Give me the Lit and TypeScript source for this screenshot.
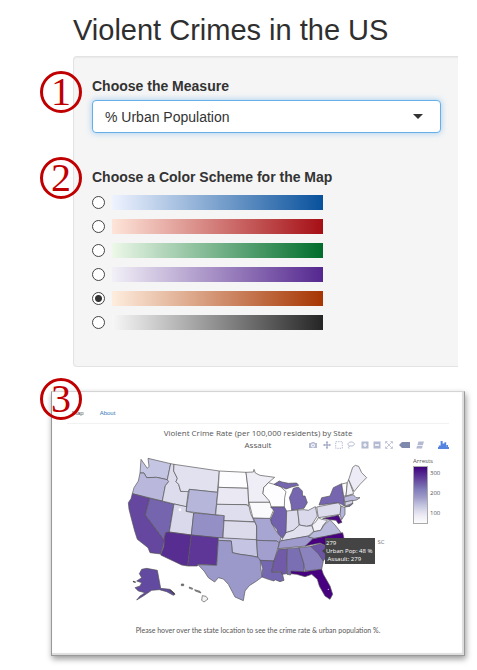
import { LitElement, html, css, svg } from "lit";
import { customElement, state } from "lit/decorators.js";

type Shape = [name: string, fill: string, points: string];

const SHAPES: Shape[] = [
  ["WA", "#c4c4e3", "63,25 82,52 87,46 84,22 152,38 142,86 110,79 80,80 72,66 60,66"],
  ["OR", "#b9b8dc", "60,66 72,66 80,80 110,79 142,86 146,92 136,104 127,150 37,128 42,110 55,90"],
  ["CA", "#65479f", "37,128 89,142 76,192 133,268 130,285 122,309 90,305 84,290 52,265 44,240 36,210 27,175 25,155 33,143"],
  ["NV", "#7564ae", "89,142 162,159 148,245 137,245 133,268 76,192"],
  ["ID", "#dddcec", "152,38 162,40 161,60 172,82 168,92 176,100 182,121 205,119 199,168 127,150 136,104 146,92 142,86"],
  ["MT", "#e2e1f0", "162,40 298,60 292,124 208,115 205,122 182,121 176,100 168,92 172,82 161,60"],
  ["WY", "#b6b5da", "208,115 293,124 286,192 198,181"],
  ["UT", "#dad9eb", "162,159 200,167 198,181 221,186 214,252 148,243"],
  ["CO", "#9490c5", "221,186 313,194 308,262 214,252"],
  ["AZ", "#582d91", "145,243 214,252 203,345 185,342 122,312 132,285 133,262 137,245"],
  ["NM", "#5e3697", "214,252 295,260 290,343 234,340 232,345 203,345"],
  ["ND", "#fdfcfe", "298,60 378,64 384,112 295,109"],
  ["SD", "#eae8f3", "295,109 384,112 386,164 378,161 290,160"],
  ["NE", "#dfdeee", "290,160 378,161 387,165 392,188 403,212 312,209 313,194 287,191"],
  ["KS", "#dcdbec", "312,209 405,213 410,225 409,268 309,262"],
  ["OK", "#c5c5e3", "295,260 409,266 413,318 390,314 360,310 337,305 334,270 295,268"],
  ["TX", "#9b98ca", "295,268 334,270 337,305 360,310 390,314 420,320 422,345 426,378 410,390 388,404 375,420 370,449 345,438 325,400 310,384 295,380 284,393 265,380 252,360 234,341 290,343"],
  ["MN", "#efedf6", "378,64 400,63 402,55 406,66 420,73 435,75 464,79 445,95 431,110 429,128 450,150 450,154 386,154 384,112"],
  ["IA", "#faf9fc", "387,154 450,154 463,172 456,188 450,203 399,201"],
  ["MO", "#a7a5d1", "400,202 450,202 456,218 468,240 484,258 478,275 470,275 470,270 410,268 410,225"],
  ["AR", "#a29fce", "410,268 470,270 478,275 474,290 462,330 421,328 413,318"],
  ["LA", "#7668b0", "421,328 462,330 458,345 455,363 486,364 492,388 480,392 465,386 462,390 445,385 426,378 428,352"],
  ["WI", "#fdfcfe", "445,95 431,110 429,128 448,150 454,168 493,168 494,140 498,122 480,106 462,100"],
  ["MI-N", "#7566af", "462,100 478,90 486,93 505,97 530,96 536,103 515,108 498,114 480,106"],
  ["MI", "#7566af", "520,112 535,108 547,120 548,135 555,135 562,155 552,172 515,178 513,160 508,140 515,125"],
  ["IL", "#7261ac", "452,168 493,168 500,180 500,230 498,248 488,262 475,248 470,235 455,218 452,205 463,180"],
  ["IN", "#dddcec", "500,180 533,177 538,225 520,238 498,245"],
  ["OH", "#dad9eb", "533,177 552,176 565,178 586,167 592,195 575,222 560,226 538,222"],
  ["KY", "#e1e0ee", "488,262 498,245 520,238 538,222 560,226 575,224 582,240 565,255 484,270"],
  ["TN", "#9e9bcc", "480,270 582,252 576,268 558,285 474,293"],
  ["WV", "#f4f2f9", "576,222 588,212 595,200 605,205 622,208 610,222 602,238 582,242"],
  ["VA", "#b9b9dc", "565,258 582,242 602,238 612,222 630,206 645,222 658,238 665,248 582,262"],
  ["PA", "#dedded", "590,168 655,155 663,165 661,190 595,200"],
  ["MD", "#4b0882", "608,202 645,195 655,192 666,214 655,218 648,208 630,206"],
  ["NY", "#7665af", "597,162 605,140 630,135 640,110 665,98 670,130 674,166 665,160 655,155"],
  ["NJ", "#b5b5da", "663,165 675,170 675,190 665,206 660,190"],
  ["VT", "#fbfafd", "665,99 682,95 678,135 671,135"],
  ["NH", "#f3f1f8", "682,95 686,86 701,128 678,135"],
  ["ME", "#edebf5", "686,86 698,49 706,43 716,46 725,65 740,80 720,100 702,122"],
  ["MA", "#bbbadd", "672,138 700,131 708,140 720,140 710,147 674,153"],
  ["CT", "#d3d2e8", "675,153 698,148 698,157 676,165"],
  ["LI", "#7665af", "675,168 690,162 699,157 690,166"],
  ["MS", "#715ba9", "475,295 502,293 500,368 486,370 484,362 455,362 462,330"],
  ["AL", "#7b6fb4", "502,293 537,290 552,340 552,362 512,365 512,372 501,370"],
  ["GA", "#8a83bd", "537,290 575,286 595,305 610,330 605,355 555,360 552,340"],
  ["SC", "#6c55a5", "572,286 600,278 625,288 632,300 610,330 595,308"],
  ["NC", "#480080", "556,285 578,264 668,245 672,262 655,290 632,300 622,286 600,276"],
  ["FL", "#460080", "513,360 552,362 605,355 610,370 630,405 638,430 630,445 615,435 598,405 592,385 575,370 555,377 530,370 513,368"],
  ["AK", "#634aa1", "65,355 80,352 112,358 122,412 150,415 165,430 160,433 140,422 118,416 95,418 70,435 50,447 60,435 75,425 55,420 45,410 60,405 65,395 50,390 65,380 58,368"],
  ["HI-1", "#777777", "184,399 191,399 191,404 184,404"],
  ["HI-2", "#999999", "208,408 218,412 217,415 208,412"],
  ["HI-3", "#999999", "224,416 240,421 243,426 226,420"],
  ["HI-4", "#f4f4f4", "247,434 258,436 264,444 252,453 245,448"],
];

const SCHEMES = [
  { id: "blues", label: "Blues", from: "#eff3ff", to: "#08519c" },
  { id: "reds", label: "Reds", from: "#fee5d9", to: "#a50f15" },
  { id: "greens", label: "Greens", from: "#edf8e9", to: "#006d2c" },
  { id: "purples", label: "Purples", from: "#f2f0f7", to: "#54278f" },
  { id: "oranges", label: "Oranges", from: "#feedde", to: "#a63603" },
  { id: "greys", label: "Greys", from: "#f7f7f7", to: "#252525" },
];

const box = (body: unknown, w = 8) =>
  html`<svg viewBox="0 0 ${w} 8" width=${w} height="8" aria-hidden="true">${body}</svg>`;

const TOOLS: { label: string; cls: string; icon: unknown }[] = [
  { label: "Download plot", cls: "", icon: box(svg`<path fill-rule="evenodd" d="M0 2H2L3 1H5L6 2H8V7H0ZM4 2.6A1.9 1.9 0 1 0 4 6.4A1.9 1.9 0 1 0 4 2.6ZM4 3.6A.9 .9 0 1 1 4 5.4A.9 .9 0 1 1 4 3.6Z"/>`) },
  { label: "Pan", cls: "group strong", icon: box(svg`<path d="M4 0L5.3 1.5H4.5V3.5H6.5V2.7L8 4L6.5 5.3V4.5H4.5V6.5H5.3L4 8L2.7 6.5H3.5V4.5H1.5V5.3L0 4L1.5 2.7V3.5H3.5V1.5H2.7Z"/>`) },
  { label: "Box select", cls: "", icon: box(svg`<rect x=".7" y=".7" width="6.6" height="6.6" fill="none" stroke="currentColor" stroke-dasharray="1.4 1"/>`) },
  { label: "Lasso select", cls: "", icon: box(svg`<path fill="none" stroke="currentColor" d="M2.4 5C-.6 3.6 1.4 1 4.2 1S8.4 3.4 6.4 4.6S3.4 4 2 5.4S2.6 6.6 2 7.6"/>`) },
  { label: "Zoom in", cls: "group", icon: box(svg`<path fill-rule="evenodd" d="M.5 .5H7.5V7.5H.5ZM3.4 2V3.4H2V4.6H3.4V6H4.6V4.6H6V3.4H4.6V2Z"/>`) },
  { label: "Zoom out", cls: "", icon: box(svg`<path fill-rule="evenodd" d="M.5 .5H7.5V7.5H.5ZM2 3.3V4.7H6V3.3Z"/>`) },
  { label: "Reset", cls: "", icon: box(svg`<path fill="none" stroke="currentColor" d="M.5 2.5V.5H2.5M5.5 .5H7.5V2.5M7.5 5.5V7.5H5.5M2.5 7.5H.5V5.5M1 1L7 7M7 1L1 7" stroke-width=".8"/>`) },
  { label: "Show closest data on hover", cls: "group tag", icon: box(svg`<path d="M0 4L3 1H11V7H3Z"/>`, 11) },
  { label: "Compare data on hover", cls: "group", icon: box(svg`<path d="M2.5 .5H8L6.8 4.3H1.3ZM1 5H6.6L6 7.4H.3Z"/>`) },
  { label: "Produced with Plotly", cls: "group logo", icon: box(svg`<path d="M0 6H11V8H0ZM.8 4.5H2.6V6.6H.8ZM2.6 0H4.6V6.6H2.6ZM4.6 2.5H6.4V6.6H4.6ZM6.4 1.2H8.2V6.6H6.4ZM8.4 4H10V6.6H8.4Z"/>`, 11) },
];

@customElement("app-root")
export class AppRoot extends LitElement {
  @state() private scheme = "oranges";

  static styles = css`
    :host {
      display: block;
      padding: 14px 12px 15px 51px;
      background: #fff;
      color: #333;
      font: 14px/20px "Liberation Sans", Arial, sans-serif;
    }
    * { box-sizing: border-box; }
    h1 {
      margin: 0 0 9px 22px;
      font-size: 29px;
      line-height: 33px;
      font-weight: 400;
      white-space: nowrap;
      color: #2f2f2f;
    }
    .panel {
      margin: 0 7px 0 22px;
      padding: 19px 17px 32px 18px;
      background: #f5f5f5;
      border: 1px solid #e3e3e3;
      border-right: 0;
      border-radius: 4px 0 0 4px;
      box-shadow: inset 0 1px 1px rgba(0, 0, 0, 0.05);
    }
    .field + .field { margin-top: 34px; }
    .caption {
      position: relative;
      display: block;
      padding: 0;
      margin: 0 0 4px;
      font-weight: 700;
      font-size: 14px;
      line-height: 20px;
    }
    legend.caption { margin-bottom: 3px; }
    .badge {
      position: absolute;
      left: -52px;
      top: -5px;
      width: 42px;
      height: 42px;
      border: 3px solid #c00000;
      border-radius: 50%;
      color: #c00000;
      font: 40px/36px "Liberation Serif", "Times New Roman", serif;
      text-align: center;
    }
    legend .badge { top: -10px; }
    .badge.card-badge { left: -12px; top: -14px; }
    .picker { position: relative; display: block; }
    select {
      appearance: none;
      display: block;
      width: 100%;
      height: 33px;
      padding: 0 12px;
      border: 1px solid #66afe9;
      border-radius: 4px;
      background: #fff;
      color: #333;
      font: inherit;
      outline: none;
      box-shadow: 0 0 6px rgba(102, 175, 233, 0.6);
    }
    .picker::after {
      content: "";
      position: absolute;
      right: 18px;
      top: 14px;
      border: 5px solid transparent;
      border-top-color: #333;
      border-bottom: 0;
      pointer-events: none;
    }
    fieldset { border: 0; margin: 0; padding: 0; min-width: 0; }
    .scheme { display: flex; align-items: center; gap: 7px; height: 24px; }
    .scheme input {
      appearance: none;
      flex: none;
      width: 13px;
      height: 13px;
      margin: 0;
      border: 1px solid #444;
      border-radius: 50%;
      background: #fff;
    }
    .scheme input:checked { background: radial-gradient(circle, #333 3px, #fff 4px); }
    .ramp { width: 211px; height: 15px; }
    .card {
      position: relative;
      margin-top: 24px;
      padding: 12px 15px 17px;
      border: 1px solid #999;
      border-top-color: #d4d4d4;
      background: #fff;
      box-shadow: inset -1px -1px 1px 1px #ddd, 1px 3px 6px rgba(0, 0, 0, 0.4);
      color: #555;
    }
    .tabs {
      display: flex;
      gap: 16px;
      padding: 4px 0 4px 5px;
      border-bottom: 1px solid #f2f2f2;
      font-size: 6px;
      line-height: 11px;
    }
    .tabs a { color: #337ab7; text-decoration: none; }
    .tabs a.current { color: #555; }
    .title, .subtitle {
      margin: 0;
      font: 8px/12px "Open Sans", sans-serif;
      text-align: center;
    }
    .title { margin-top: 3px; }
    .head { display: grid; grid-template-columns: 1fr auto 1fr; align-items: center; }
    .subtitle { grid-column: 2; }
    .tools { display: flex; justify-content: flex-end; gap: 4px; color: #b4bad2; }
    .tools button {
      display: block;
      padding: 0;
      border: 0;
      background: none;
      color: inherit;
      line-height: 0;
    }
    .tools svg { fill: currentColor; display: block; }
    .tools .group { margin-left: 2px; }
    .tools .strong { color: #8d96b8; }
    .tools .tag { color: #7e89ab; }
    .tools .logo { color: #5484e0; margin-left: 10px; }
    .plot { display: flex; justify-content: space-between; padding: 0 8px 0 53px; }
    .map { position: relative; flex: 0 1 250px; }
    .map > svg { display: block; width: 100%; height: auto; }
    .tip {
      position: absolute;
      left: 82%;
      top: 87px;
      padding: 1px;
      background: #444;
      color: #fff;
      font: 6px/8px "Open Sans", sans-serif;
      white-space: pre;
      width: 50px;
    }
    .place {
      position: absolute;
      left: 103%;
      top: 87px;
      font: 6px/8px "Open Sans", sans-serif;
      color: #777;
    }
    .legend { width: 28px; padding-top: 6px; font: 6px/8px "Open Sans", sans-serif; }
    .scale { display: flex; gap: 2px; margin-top: 1px; }
    .bar {
      width: 15px;
      height: 58px;
      border: 1px solid #aaa;
      background: linear-gradient(#3f007d, #54278f 12%, #6a51a3 26%, #807dba 40%, #9e9ac8 54%, #bcbddc 66%, #dadaeb 78%, #efedf5 88%, #fcfbfd);
    }
    .ticks { display: grid; gap: 12px; align-content: start; padding-top: 3px; }
    .note {
      margin: 16px 0 0;
      text-align: center;
      font: 7px/16px Lato, sans-serif;
    }
  `;

  render() {
    return html`
      <h1>Violent Crimes in the US</h1>
      <form class="panel">
        <div class="field">
          <label class="caption" for="measure"><span class="badge" aria-hidden="true">1</span>Choose the Measure</label>
          <span class="picker">
            <select id="measure"><option>% Urban Population</option></select>
          </span>
        </div>
        <fieldset class="field">
          <legend class="caption"><span class="badge" aria-hidden="true">2</span>Choose a Color Scheme for the Map</legend>
          ${SCHEMES.map(
            (s) => html`<label class="scheme">
              <input type="radio" name="scheme" aria-label=${s.label}
                .checked=${this.scheme === s.id} @change=${() => (this.scheme = s.id)} />
              <span class="ramp" style="background:linear-gradient(90deg, ${s.from}, ${s.to})"></span>
            </label>`
          )}
        </fieldset>
      </form>
      <section class="card">
        <nav class="tabs">
          <a class="current" href="#map">Map</a>
          <a href="#about">About</a>
        </nav>
        <span class="badge card-badge">3</span>
        <h2 class="title">Violent Crime Rate (per 100,000 residents) by State</h2>
        <div class="head">
          <h3 class="subtitle">Assault</h3>
          <div class="tools">
            ${TOOLS.map((t) => html`<button type="button" class=${t.cls} aria-label=${t.label}>${t.icon}</button>`)}
          </div>
        </div>
        <div class="plot">
          <div class="map">
            <svg viewBox="0 0 750 465" role="img" aria-label="Map of the United States">
              ${SHAPES.map(
                ([, fill, points]) => svg`<polygon points=${points} fill=${fill}
                  stroke="#555" stroke-width="2" stroke-linejoin="round"/>`
              )}
              <circle cx="180" cy="176" r="4" fill="#fff" />
              <circle cx="625" cy="415" r="2" fill="#d8c8e8" />
              <path d="M39 391l8 3M150 417l14 12" stroke="#444" stroke-width="4" fill="none" />
              <path d="M606 300l10 -9v18z" fill="#444" />
            </svg>
            <div class="tip">279<br />Urban Pop: 48 %<br /> Assault: 279</div>
            <span class="place">SC</span>
          </div>
          <div class="legend">
            <div>Arrests</div>
            <div class="scale">
              <div class="bar"></div>
              <div class="ticks"><span>300</span><span>200</span><span>100</span></div>
            </div>
          </div>
        </div>
        <p class="note">Please hover over the state location to see the crime rate &amp; urban population %.</p>
      </section>
    `;
  }
}
